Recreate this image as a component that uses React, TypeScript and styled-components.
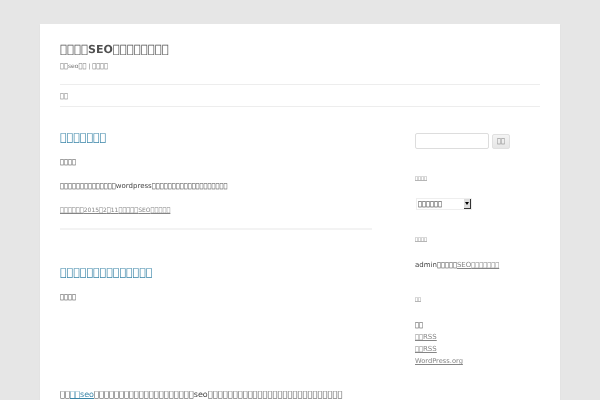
import React from "react";
import styled, { createGlobalStyle } from "styled-components";

const Tofu = styled.span`font-size: var(--tofu, 0.95em); line-height: 0;`;
const T = ({ n }: { n: number }) => <Tofu>{"\uE000".repeat(n)}</Tofu>;

const Global = createGlobalStyle`
  html, body { margin: 0; padding: 0; background: #e6e6e6; }
  body { height: 400px; overflow: hidden; font-family: "DejaVu Sans", sans-serif; color: #444; font-size: 7px; line-height: 12px; text-rendering: geometricPrecision; }
  a { color: inherit; }
`;
const Page = styled.div`
  width: 520px; height: 376px; margin: 24px 0 0 40px; padding: 0 20px; box-sizing: border-box;
  background: #fff; box-shadow: 0 1px 1px rgba(64,64,64,0.1); overflow: hidden; filter: blur(0.3px);
`;
const Header = styled.header`padding: 12px 0 0;`;
const SiteTitle = styled.h1`--tofu: 1.06em; margin: 0; padding-top: 6px; font-size: 11px; line-height: 16px; font-weight: 700; color: #515151;`;
const Tagline = styled.h2`--tofu: 1.1em; margin: 3px 0 0; font-size: 6px; line-height: 12px; font-weight: 400; color: #757575;`;
const Nav = styled.nav`
  --tofu: 1.1em; margin-top: 11px; height: 21px; border-top: 1px solid #ededed; border-bottom: 1px solid #ededed;
  font-size: 6px; line-height: 23px; color: #757575;
`;
const Columns = styled.div`display: flex; justify-content: space-between; margin-top: 24px;`;
const Main = styled.main`width: 312px;`;
const Aside = styled.aside`width: 125px; padding-top: 2px;`;
const Entry = styled.article<{ $rule?: boolean }>`
  padding-bottom: ${p => (p.$rule ? "11px" : "0")};
  margin-bottom: ${p => (p.$rule ? "36px" : "0")};
  border-bottom: ${p => (p.$rule ? "2px solid #f3f3f3" : "none")};
`;
const EntryTitle = styled.h1`--tofu: 1em; margin: 0 0 11px; font-size: 11px; line-height: 14px; font-weight: 400; color: #3a85a8;`;
const Para = styled.p`margin: 0 0 12px; color: #444;`;
const LeadPara = styled.p`--tofu: 1.04em; margin: 0; font-size: 8px; line-height: 12px; color: #444;`;
const Meta = styled.footer`--tofu: 1.1em; padding-top: 1px; font-size: 6px; line-height: 12px; color: #858585; text-decoration: underline;`;
const Figure = styled.div`height: 74px;`;
const Link = styled.a`color: #3a85a8; text-decoration: underline;`;
const SearchRow = styled.form`display: flex; gap: 3px; align-items: center; margin: 0 0 24px;`;
const SearchInput = styled.div`width: 74px; height: 16px; box-sizing: border-box; border: 1px solid #ddd; border-radius: 2px;`;
const SearchButton = styled.div`
  --tofu: 1.1em; width: 18px; height: 15px; box-sizing: border-box; border: 1px solid #e0e0e0; border-radius: 2px;
  background: linear-gradient(#f4f4f4, #e6e6e6); font-size: 6px; line-height: 13px; text-align: center; color: #7c7c7c;
`;
const WidgetTitle = styled.h3`--tofu: 1em; margin: 0 0 12px; font-size: 5px; line-height: 13px; font-weight: 400; color: #757575;`;
const Widget = styled.section<{ $gap?: number }>`margin-bottom: ${p => p.$gap ?? 23}px;`;
const Select = styled.div`
  display: flex; justify-content: space-between; width: 56px; height: 12px; margin-left: 1px; box-sizing: border-box;
  border: 1px solid #eee; padding-left: 1px; line-height: 10px; color: #222;
`;
const Arrow = styled.span`
  width: 7px; height: 10px; background: #ddd; border-right: 1px solid #333; border-bottom: 1px solid #333; box-sizing: border-box;
  display: flex; align-items: center; justify-content: center;
  &::after { content: ""; border: 2px solid transparent; border-top: 3px solid #000; margin-top: 2px; }
`;
const Plain = styled.p`margin: 0;`;
const Under = styled.span`color: #858585; text-decoration: underline;`;
const Small = styled.span`font-size: 6.7px; color: #858585; text-decoration: underline;`;

export default function App() {
  return (
    <Page>
      <Global />
      <Header>
        <SiteTitle><T n={4} />SEO<T n={8} /></SiteTitle>
        <Tagline><T n={2} />seo<T n={2} /> | <T n={4} /></Tagline>
        <Nav><T n={2} /></Nav>
      </Header>
      <Columns>
        <Main>
          <Entry $rule>
            <EntryTitle><T n={7} /></EntryTitle>
            <Para><T n={4} /></Para>
            <Para><T n={14} />wordpress<T n={19} /></Para>
            <Meta><T n={6} />2015<T n={1} />2<T n={1} />11<T n={5} />SEO<T n={5} /></Meta>
          </Entry>
          <Entry>
            <EntryTitle><T n={14} /></EntryTitle>
            <Para><T n={4} /></Para>
            <Figure />
            <LeadPara><T n={2} /><Link><T n={2} />seo</Link><T n={20} />seo<T n={27} /></LeadPara>
          </Entry>
        </Main>
        <Aside>
          <SearchRow>
            <SearchInput />
            <SearchButton><T n={2} /></SearchButton>
          </SearchRow>
          <Widget $gap={24}>
            <WidgetTitle><T n={4} /></WidgetTitle>
            <Select><span><T n={6} /></span><Arrow /></Select>
          </Widget>
          <Widget>
            <WidgetTitle><T n={4} /></WidgetTitle>
            <Plain>admin<T n={5} /><Under>SEO<T n={7} /></Under></Plain>
          </Widget>
          <Widget>
            <WidgetTitle><T n={2} /></WidgetTitle>
            <Plain><T n={2} /></Plain>
            <Plain><Under><T n={2} />RSS</Under></Plain>
            <Plain><Under><T n={2} />RSS</Under></Plain>
            <Plain><Small>WordPress.org</Small></Plain>
          </Widget>
        </Aside>
      </Columns>
    </Page>
  );
}
